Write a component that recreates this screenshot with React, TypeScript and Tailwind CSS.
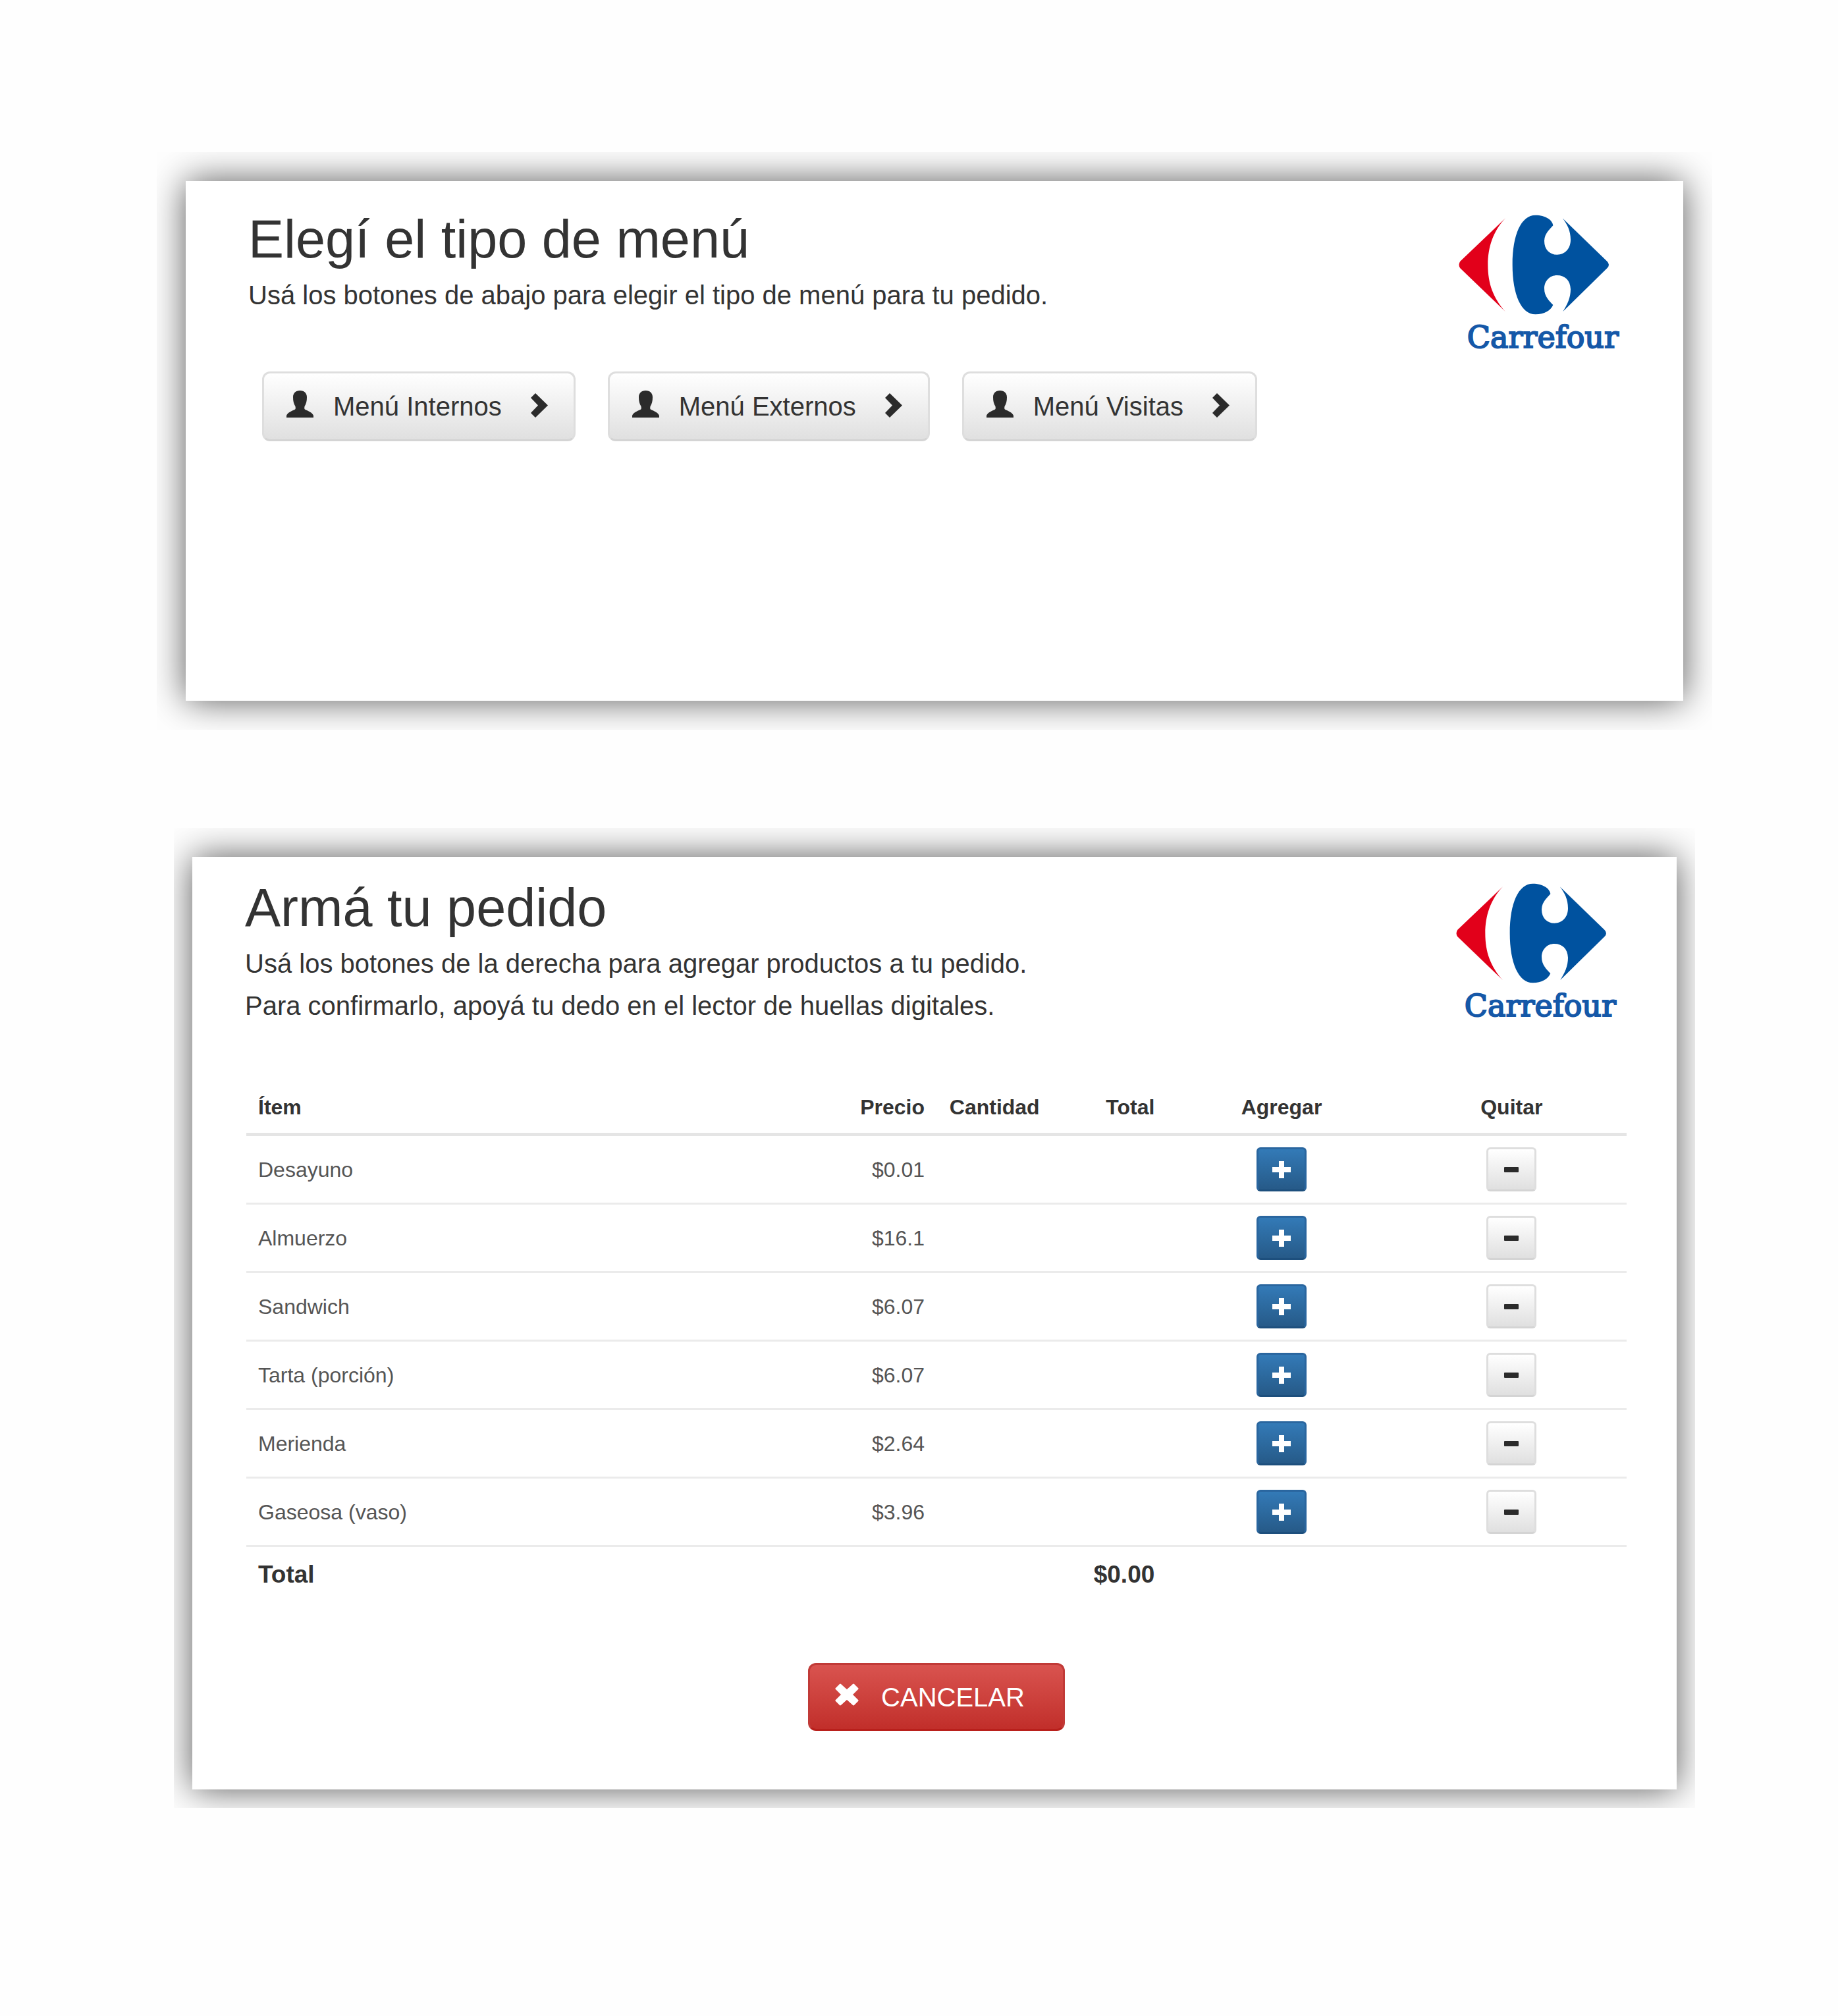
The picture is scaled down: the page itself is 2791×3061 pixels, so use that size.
import type { ReactNode } from 'react';

const menus = ['Menú Internos', 'Menú Externos', 'Menú Visitas'];

const items = [
  { name: 'Desayuno', price: '$0.01' },
  { name: 'Almuerzo', price: '$16.1' },
  { name: 'Sandwich', price: '$6.07' },
  { name: 'Tarta (porción)', price: '$6.07' },
  { name: 'Merienda', price: '$2.64' },
  { name: 'Gaseosa (vaso)', price: '$3.96' },
];

function Logo() {
  return (
    <div className="flex w-[243px] shrink-0 flex-col">
      <svg viewBox="105 76 690 456" className="h-[152px] w-[230px]" aria-hidden="true">
        <path
          fill="#e2001a"
          d="M318 92 L112 288 Q101 304 112 320 L318 518 C262 455 238 390 238 304 C238 225 262 150 318 92Z"
        />
        <path
          fill="#00529f"
          d="M455 78 C500 78 533 100 535 125 C520 143 497 160 495 195 C495 235 520 258 553 258 C590 258 615 230 615 190 C615 150 600 120 578 92 L781 288 Q797 304 781 320 L580 517 C600 485 615 455 615 415 C613 375 590 352 553 352 C520 352 495 378 495 412 C495 450 518 468 535 487 C525 512 495 530 455 530 C390 530 350 440 350 304 C350 165 390 78 455 78Z"
        />
      </svg>
      <span className="self-end font-['DejaVu_Serif',serif] text-[46px] leading-[68px] text-[#1558a8] [-webkit-text-stroke:2px_#1558a8]">
        Carrefour
      </span>
    </div>
  );
}

function UserIcon() {
  return (
    <svg viewBox="0 0 41 41" className="mb-2 h-[41px] w-[41px]" fill="currentColor" aria-hidden="true">
      <path d="M20.5 0C27 0 31 4 31 10C31 16 30 20 27.5 24C27 27 27 28 28.5 29C33 31 39 33 41 38V41H0V38C2 33 8 31 12.5 29C14 28 14 27 13.5 24C11 20 10 16 10 10C10 4 14 0 20.5 0Z" />
    </svg>
  );
}

function ChevronIcon() {
  return (
    <svg viewBox="0 0 27 37" className="mb-1 h-[37px] w-[27px]" fill="currentColor" aria-hidden="true">
      <path d="M8 0L27 18.5L8 37L1 30L12 18.5L1 7Z" />
    </svg>
  );
}

function Header({ title, children }: { title: string; children: ReactNode }) {
  return (
    <header className="flex items-start justify-between">
      <div>
        <h2 className="text-[81px] leading-[90px]">{title}</h2>
        <div className="mt-2 text-[40px] leading-[64px]">{children}</div>
      </div>
      <div className="pt-2">
        <Logo />
      </div>
    </header>
  );
}

const panel = 'bg-white shadow-[0_0_52px_rgba(0,0,0,0.65)]';
const lightButton =
  'border-[3px] border-[#dedede] border-b-[#d4d4d4] bg-linear-to-b from-white to-[#e0e0e0] text-[#2b2b2b]';

export default function App() {
  return (
    <main className="min-h-screen bg-[#fefefe] pt-[231px] pr-[191px] pl-[238px] font-['Liberation_Sans',Arial,sans-serif] text-[#333]">
      <div className="overflow-hidden p-11">
        <section className={`${panel} pt-[43px] pr-[98px] pb-[394px] pl-[95px]`}>
          <Header title="Elegí el tipo de menú">
            <p>Usá los botones de abajo para elegir el tipo de menú para tu pedido.</p>
          </Header>
          <div className="mt-[18px] ml-[21px] flex gap-[49px]">
            {menus.map((label) => (
              <button
                key={label}
                type="button"
                className={`${lightButton} flex h-[106px] items-center rounded-xl pr-[39px] pl-[34px] text-[40px]`}
              >
                <UserIcon />
                <span className="mr-[43px] ml-[30px] text-[#333]">{label}</span>
                <ChevronIcon />
              </button>
            ))}
          </div>
        </section>
      </div>

      <div className="mt-[149px] mr-[26px] ml-[26px] overflow-hidden px-7 pt-11 pb-7">
        <section className={`${panel} pt-8 pr-[76px] pb-[89px] pl-20`}>
          <div className="pr-4">
            <Header title="Armá tu pedido">
              <p>Usá los botones de la derecha para agregar productos a tu pedido.</p>
              <p>Para confirmarlo, apoyá tu dedo en el lector de huellas digitales.</p>
            </Header>
          </div>
          <div className="mt-[79px] pl-0.5">
            <table className="w-full table-fixed border-separate border-spacing-0 text-[32px] leading-[46px]">
              <thead>
                <tr className="[&>th]:border-b-[5px] [&>th]:border-[#e5e5e5] [&>th]:px-[18px] [&>th]:pt-[18px] [&>th]:pb-4">
                  <th scope="col" className="w-5/12 text-left">Ítem</th>
                  <th scope="col" className="w-1/12 text-right">Precio</th>
                  <th scope="col" className="w-1/12 text-right">Cantidad</th>
                  <th scope="col" className="w-1/12 text-right">Total</th>
                  <th scope="col" className="w-1/6 text-center">Agregar</th>
                  <th scope="col" className="w-1/6 text-center">Quitar</th>
                </tr>
              </thead>
              <tbody>
                {items.map((item) => (
                  <tr
                    key={item.name}
                    className="text-[#555] [&>td]:border-b-[3px] [&>td]:border-[#ebebeb] [&>td]:px-[18px] [&>td]:py-[17px]"
                  >
                    <td>{item.name}</td>
                    <td className="text-right">{item.price}</td>
                    <td />
                    <td />
                    <td>
                      <button
                        type="button"
                        aria-label={`Agregar ${item.name}`}
                        className="mx-auto flex h-[67px] w-[76px] items-center justify-center rounded-md border-[3px] border-[#2a669f] border-b-[#1d4f7d] bg-linear-to-b from-[#337ab7] to-[#265a88] text-white"
                      >
                        <svg viewBox="0 0 28 26" className="h-[26px] w-7" fill="currentColor" aria-hidden="true">
                          <path d="M10 0H18V9H28V17H18V26H10V17H0V9H10Z" />
                        </svg>
                      </button>
                    </td>
                    <td>
                      <button
                        type="button"
                        aria-label={`Quitar ${item.name}`}
                        className={`${lightButton} mx-auto flex h-[67px] w-[76px] items-center justify-center rounded-md`}
                      >
                        <svg viewBox="0 0 22 8" className="h-2 w-[22px]" fill="currentColor" aria-hidden="true">
                          <rect width="22" height="8" rx="1" />
                        </svg>
                      </button>
                    </td>
                  </tr>
                ))}
              </tbody>
              <tfoot>
                <tr className="text-[37px] leading-[52px] [&>*]:px-[18px] [&>*]:py-4">
                  <th scope="row" className="text-left">Total</th>
                  <td />
                  <td />
                  <td className="text-right font-bold">$0.00</td>
                  <td />
                  <td />
                </tr>
              </tfoot>
            </table>
            <div className="mt-[92px] flex justify-center">
              <button
                type="button"
                className="flex h-[103px] items-center rounded-xl border-[3px] border-[#c13a37] border-b-[#b81f1b] bg-linear-to-b from-[#d9534f] to-[#c12e2a] pr-[58px] pl-[38px] text-[40px] text-white"
              >
                <svg viewBox="0 0 36 34" className="mb-2 h-[34px] w-9" aria-hidden="true">
                  <path
                    d="M8 2L18 11L28 2L34 8L25 17L34 26L28 32L18 23L8 32L2 26L11 17L2 8Z"
                    fill="currentColor"
                    stroke="currentColor"
                    strokeWidth="3"
                    strokeLinejoin="round"
                  />
                </svg>
                <span className="ml-[34px]">CANCELAR</span>
              </button>
            </div>
          </div>
        </section>
      </div>
    </main>
  );
}
